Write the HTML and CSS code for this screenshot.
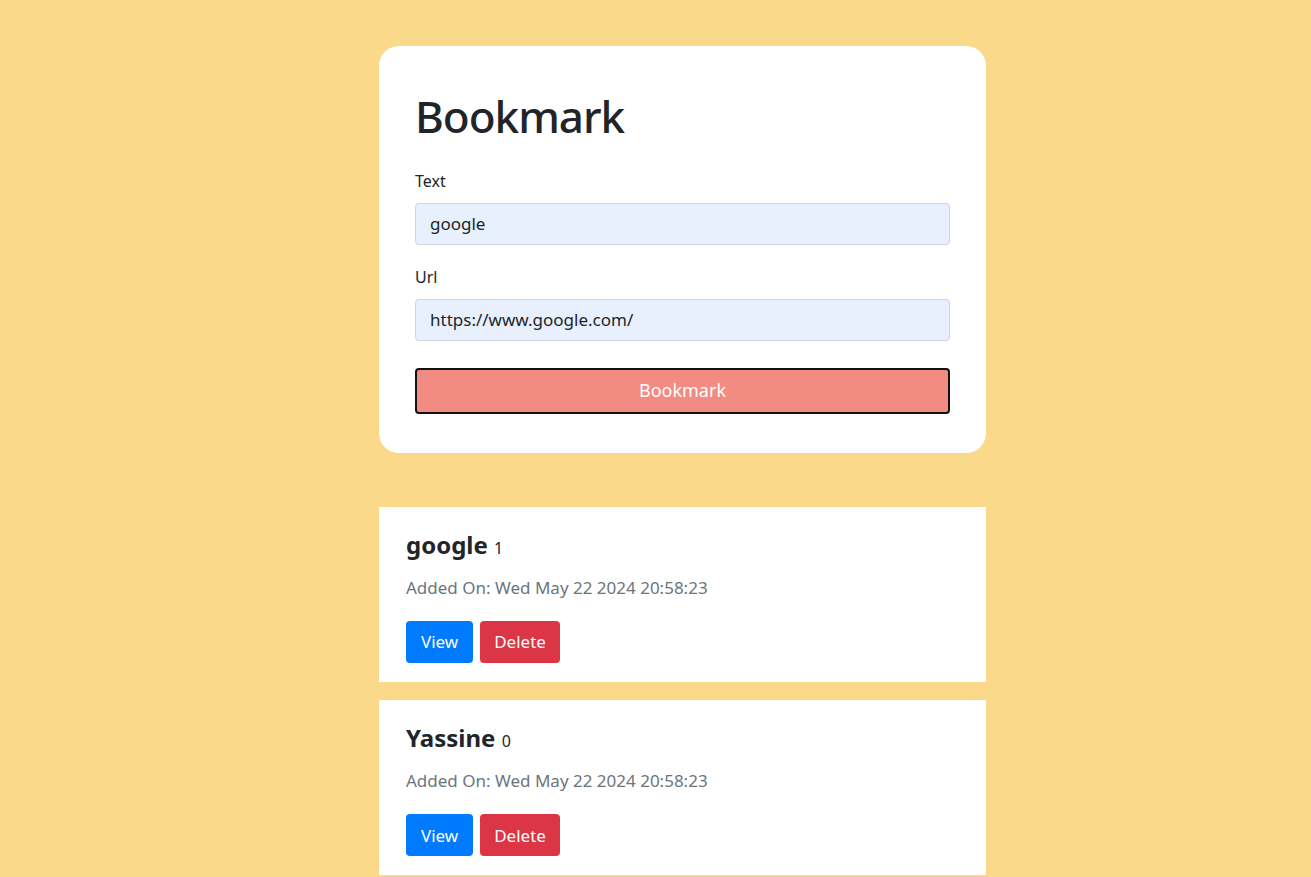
FILE: index.html
```html
<!DOCTYPE html>
<html lang="en">
<head>
<meta charset="utf-8">
<title>Bookmark</title>
<link rel="stylesheet" href="styles.css">
</head>
<body>
<main class="page">
  <section class="form-card">
    <h1 class="title">Bookmark</h1>
    <label class="field-label" for="text">Text</label>
    <input class="field" id="text" type="text" value="google">
    <label class="field-label" for="url">Url</label>
    <input class="field" id="url" type="text" value="https://www.google.com/">
    <button class="submit" type="button">Bookmark</button>
  </section>

  <section class="list">
    <article class="item">
      <h2 class="item-title">google <span class="count">1</span></h2>
      <p class="item-date">Added On: Wed May 22 2024 20:58:23</p>
      <div class="actions">
        <button class="btn btn-view" type="button">View</button>
        <button class="btn btn-delete" type="button">Delete</button>
      </div>
    </article>
    <article class="item">
      <h2 class="item-title">Yassine <span class="count">0</span></h2>
      <p class="item-date">Added On: Wed May 22 2024 20:58:23</p>
      <div class="actions">
        <button class="btn btn-view" type="button">View</button>
        <button class="btn btn-delete" type="button">Delete</button>
      </div>
    </article>
  </section>
</main>
</body>
</html>
```

FILE: styles.css
```css
* { box-sizing: border-box; }

body {
  margin: 0;
  padding-left: 54px;
  background: #fad98a;
  font-family: "Noto Sans", "Open Sans", sans-serif;
  color: #212529;
  font-size: 16px;
  line-height: 1.5;
}

.page {
  width: 607px;
  margin: 46px auto 0;
  display: flex;
  flex-direction: column;
}

.form-card {
  background: #fff;
  border-radius: 20px;
  padding: 36px 36px 39px;
  display: flex;
  flex-direction: column;
}

.title {
  margin: 8px 0 26px;
  font-size: 44px;
  font-weight: 500;
  line-height: 1.2;
  letter-spacing: -1px;
}

.field-label {
  display: block;
  margin-bottom: 10px;
  font-size: 16px;
  line-height: 24px;
}

.field {
  display: block;
  width: 100%;
  height: 42px;
  margin-bottom: 20px;
  padding: 0 14px;
  font: inherit;
  font-size: 17px;
  color: #212529;
  background: #e8f0fe;
  border: 1px solid #ced4da;
  border-radius: 4px;
}

.field:last-of-type { margin-bottom: 0; }

.submit {
  margin-top: 27px;
  height: 46px;
  width: 100%;
  background: #f28b82;
  color: #fff;
  font: inherit;
  font-size: 18px;
  border: 2px solid #111;
  border-radius: 4px;
}

.list {
  margin-top: 54px;
  display: flex;
  flex-direction: column;
  gap: 18px;
}

.item {
  background: #fff;
  padding: 24px 27px 19px;
}

.item-title {
  margin: 0 0 15px;
  font-size: 24px;
  font-weight: 700;
  line-height: 1.2;
}

.count {
  font-size: 16px;
  font-weight: 400;
}

.item-date {
  margin: 0 0 21px;
  color: #6c757d;
  font-size: 17px;
}

.actions {
  display: flex;
  gap: 7px;
}

.btn {
  height: 42px;
  padding: 0 15px;
  font: inherit;
  font-size: 17px;
  color: #fff;
  border: none;
  border-radius: 4px;
}

.btn-view { background: #007bff; }
.btn-delete { background: #dc3545; padding: 0 14px; }
```
